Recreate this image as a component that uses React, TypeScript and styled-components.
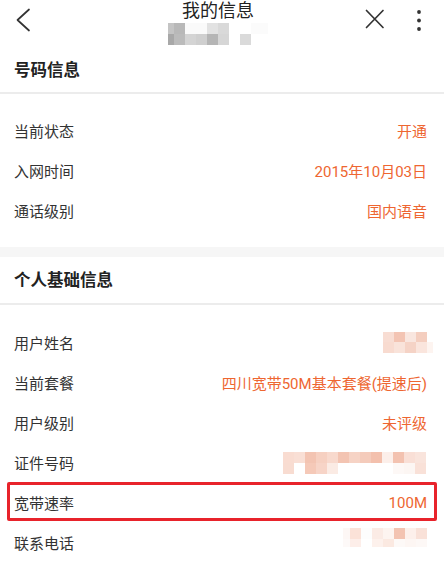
import React from 'react';
import styled, { createGlobalStyle } from 'styled-components';

const GlobalStyle = createGlobalStyle`
  html, body {
    margin: 0;
    padding: 0;
    background: #ffffff;
  }
  body {
    font-family: Roboto, "Noto Sans CJK SC", "Noto Sans", sans-serif;
    color: #333333;
  }
`;

const Page = styled.div`
  width: 444px;
  background: #ffffff;
`;

const Header = styled.div`
  display: grid;
  grid-template-columns: 76px 1fr 84px;
  height: 48px;
`;

const HeaderIcon = styled.svg`
  display: block;
`;

const TitleBlock = styled.div`
  display: flex;
  flex-direction: column;
  align-items: center;
`;

const Title = styled.div`
  font-size: 18px;
  line-height: 22px;
  color: #222222;
`;

const SubTitle = styled.div`
  margin-top: 1px;
`;

const SectionTitle = styled.div<{ $height: number }>`
  height: ${(p) => p.$height}px;
  box-sizing: border-box;
  display: flex;
  align-items: center;
  padding: 0 0 3px 14px;
  font-size: 16.5px;
  font-weight: bold;
  color: #222222;
  border-bottom: 2px solid #ececec;
`;

const List = styled.div<{ $top: number; $bottom: number }>`
  padding: ${(p) => p.$top}px 0 ${(p) => p.$bottom}px;
`;

const Row = styled.div<{ $marked?: boolean }>`
  position: relative;
  height: 40px;
  box-sizing: border-box;
  display: flex;
  align-items: center;
  justify-content: space-between;
  padding: 0 17px 1px 14px;
  font-size: 15px;

  ${(p) =>
    p.$marked &&
    `
    &::after {
      content: '';
      position: absolute;
      top: -1px;
      left: 7px;
      right: 7px;
      height: 39px;
      box-sizing: border-box;
      border: 3px solid #e8232b;
      border-radius: 2px;
    }
  `}
`;

const Label = styled.span`
  color: #333333;
`;

const Value = styled.span`
  color: #ee6631;
`;

const Masked = styled.div<{ $right?: number; $lift?: number }>`
  display: flex;
  margin-right: ${(p) => -(p.$right || 0)}px;
  margin-bottom: ${(p) => (p.$lift || 0) * 2}px;
`;

const Band = styled.div`
  height: 10px;
  background: #f6f6f6;
`;

type MosaicProps = { cols: number[]; rows: number[]; colors: string[][] };

// pixelated blocks that hide personal data in the screenshot
const Mosaic = ({ cols, rows, colors }: MosaicProps) => {
  const width = cols.reduce((a, b) => a + b, 0);
  const height = rows.reduce((a, b) => a + b, 0);
  const cells: React.ReactNode[] = [];
  let y = 0;
  rows.forEach((h, r) => {
    let x = 0;
    cols.forEach((w, c) => {
      const fill = colors[r][c];
      if (fill && fill !== '#fff') {
        cells.push(<rect key={`${r}-${c}`} x={x} y={y} width={w} height={h} fill={fill} />);
      }
      x += w;
    });
    y += h;
  });
  return (
    <svg width={width} height={height} viewBox={`0 0 ${width} ${height}`} style={{ display: 'block' }}>
      {cells}
    </svg>
  );
};

const elevens = (n: number) => Array.from({ length: n }, () => 11);

const numberRows = [
  { label: '当前状态', value: '开通' },
  { label: '入网时间', value: '2015年10月03日' },
  { label: '通话级别', value: '国内语音' },
];

const App = () => {
  return (
    <Page>
      <GlobalStyle />
      <Header>
        <HeaderIcon width="76" height="40" viewBox="0 0 76 40">
          <path d="M29 9.5 L17.5 20 L29 30.5" fill="none" stroke="#333" strokeWidth="1.7" strokeLinecap="round" strokeLinejoin="round" />
        </HeaderIcon>
        <TitleBlock>
          <Title>我的信息</Title>
          <SubTitle>
            <Mosaic
              cols={[6, ...elevens(8), 6]}
              rows={[11, 11]}
              colors={[
                ['#c4c4c4', '#b8b8b8', '#fafafa', '#fafafa', '#e2e2e2', '#d9d9d9', '#fff', '#fff', '#fbfbfb', '#fbfbfb'],
                ['#a8a8a8', '#bbbbbb', '#d4d4d4', '#cfcfcf', '#b5b5b5', '#d6d6d6', '#fff', '#dadada', '#fff', '#fff'],
              ]}
            />
          </SubTitle>
        </TitleBlock>
        <HeaderIcon width="84" height="40" viewBox="0 0 84 40">
          <path d="M6.5 10.5 L23 27.5 M23 10.5 L6.5 27.5" fill="none" stroke="#333" strokeWidth="1.7" strokeLinecap="round" />
          <circle cx="59" cy="12" r="1.9" fill="#333" />
          <circle cx="59" cy="20.5" r="1.9" fill="#333" />
          <circle cx="59" cy="29" r="1.9" fill="#333" />
        </HeaderIcon>
      </Header>

      <SectionTitle $height={46}>号码信息</SectionTitle>
      <List $top={17} $bottom={16}>
        {numberRows.map((r) => (
          <Row key={r.label}>
            <Label>{r.label}</Label>
            <Value>{r.value}</Value>
          </Row>
        ))}
      </List>

      <Band />

      <SectionTitle $height={48}>个人基础信息</SectionTitle>
      <List $top={18} $bottom={16}>
        <Row>
          <Label>用户姓名</Label>
          <Masked $right={6}>
            <Mosaic
              cols={[11, 11, 11, 11, 6]}
              rows={[10, 11]}
              colors={[
                ['#f8ddd3', '#f3c4b3', '#f9e6df', '#f4cebf', '#fff'],
                ['#f8dbd0', '#f9e3da', '#f5d3c6', '#fae5dd', '#fdf4f0'],
              ]}
            />
          </Masked>
        </Row>
        <Row>
          <Label>当前套餐</Label>
          <Value>四川宽带50M基本套餐(提速后)</Value>
        </Row>
        <Row>
          <Label>用户级别</Label>
          <Value>未评级</Value>
        </Row>
        <Row>
          <Label>证件号码</Label>
          <Masked $right={-1}>
            <Mosaic
              cols={elevens(13)}
              rows={[11, 11]}
              colors={[
                ['#f9dcd1', '#f9dfd5', '#f3c4b2', '#f6d0c1', '#f8d9cd', '#f3c4b2', '#f6d3c5', '#f4cbbb', '#f3c0ad', '#fcefea', '#f3c2b0', '#f9dfd6', '#f9e4dc'],
                ['#f8dcd1', '#fff', '#f5c9b8', '#f7d4c7', '#fbebe4', '#fff', '#fff', '#fff', '#fff', '#fff', '#fdf8f6', '#fcf6f3', '#f9e1d8'],
              ]}
            />
          </Masked>
        </Row>
        <Row $marked>
          <Label>宽带速率</Label>
          <Value>100M</Value>
        </Row>
        <Row>
          <Label>联系电话</Label>
          <Masked $lift={5}>
            <Mosaic
              cols={[7, ...elevens(7)]}
              rows={[11, 8]}
              colors={[
                ['#fdf7f5', '#fbe2d8', '#fdfdfd', '#fbebe5', '#fdf4f0', '#f3c3b1', '#fdf0eb', '#f9e1d8'],
                ['#fdf9f8', '#fdeee9', '#fff', '#fdf1ec', '#fbe9e1', '#fdf9f7', '#fdf6f3', '#fdf8f6'],
              ]}
            />
          </Masked>
        </Row>
      </List>
    </Page>
  );
};

export default App;
